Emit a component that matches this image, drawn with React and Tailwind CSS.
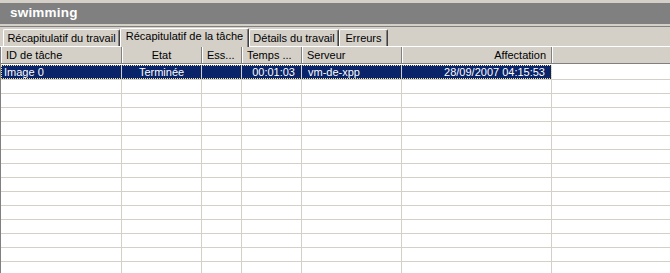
import React from "react";

const cols = [
  { label: "ID de tâche", w: 121, align: "left" },
  { label: "Etat", w: 80, align: "center" },
  { label: "Ess...", w: 40, align: "left" },
  { label: "Temps ...", w: 60, align: "left" },
  { label: "Serveur", w: 100, align: "left" },
  { label: "Affectation", w: 150, align: "right" },
];

const row1 = [
  { t: "Image 0", a: "left" },
  { t: "Terminée", a: "center" },
  { t: "", a: "left" },
  { t: "00:01:03", a: "right" },
  { t: "vm-de-xpp", a: "left" },
  { t: "28/09/2007 04:15:53", a: "right" },
];

const alignCls = {
  left: "justify-start",
  center: "justify-center",
  right: "justify-end",
};

function Tab({ label, w, selected }) {
  return (
    <div
      style={{ width: w }}
      className={
        selected
          ? "shrink-0 h-[19px] flex items-start justify-center pt-[2px] border-l border-t border-white border-r border-r-[#404040] rounded-t-[2px] bg-[#d4d0c8] shadow-[inset_-1px_0_0_#808080] -mb-[1px] z-10"
          : "shrink-0 h-[17px] flex items-center justify-center border-l border-t border-white border-r border-r-[#404040] rounded-t-[2px] bg-[#d4d0c8] shadow-[inset_-1px_0_0_#808080]"
      }
    >
      <span className="leading-none whitespace-nowrap">{label}</span>
    </div>
  );
}

export default function App() {
  const emptyRows = Array.from({ length: 14 });
  return (
    <div
      className="w-[670px] h-[273px] overflow-hidden bg-[#d4d0c8] text-[11px] text-black flex flex-col"
      style={{ fontFamily: '"Liberation Sans", Arial, sans-serif' }}
    >
      <div className="shrink-0 pt-[3px]">
        <div className="h-[21px] bg-[#808080] flex items-center pl-[10px] text-white font-bold text-[13.5px] tracking-[0.2px]">
          swimming
        </div>
      </div>
      <div className="shrink-0 h-[2px]" />
      <div className="shrink-0 h-[1px] bg-[#808080]" />
      <div className="shrink-0 h-[20px] flex items-end pl-[3px] border-b border-white">
        <Tab label="Récapitulatif du travail" w={117} />
        <Tab label="Récapitulatif de la tâche" w={129} selected />
        <Tab label="Détails du travail" w={90} />
        <Tab label="Erreurs" w={49} />
      </div>
      <div className="flex-1 min-h-0 overflow-hidden bg-white border-l border-[#808080] flex flex-col">
        <div className="shrink-0 h-[17px] flex bg-[#d4d0c8] border-b border-[#808080]">
          {cols.map((c, i) => (
            <div
              key={i}
              style={{ width: c.w }}
              className={`shrink-0 h-full flex items-center px-[5px] border-r border-[#808080] shadow-[inset_1px_0_0_#ffffff] ${alignCls[c.align]}`}
            >
              <span className="whitespace-nowrap">{c.label}</span>
            </div>
          ))}
          <div className="flex-1 shadow-[inset_1px_0_0_#ffffff]" />
        </div>
        <div className="shrink-0 h-[1px]" />
        <div className="shrink-0 h-[15px] flex border-b border-[#d4d0c8]">
          <div className="flex bg-[#0a246a] text-white relative">
            <div className="absolute inset-0 border border-dotted border-[#f0e6a0] pointer-events-none" />
            {row1.map((c, i) => (
              <div
                key={i}
                style={{ width: cols[i].w }}
                className={`shrink-0 h-full flex items-center border-r border-[#d4d0c8] ${alignCls[c.a]} ${
                  i === 0 ? "pl-[3px]" : "px-[6px]"
                }`}
              >
                <span className="whitespace-nowrap leading-none">{c.t}</span>
              </div>
            ))}
          </div>
          <div className="flex-1" />
        </div>
        {emptyRows.map((_, r) => (
          <div key={r} className="h-[14px] shrink-0 flex border-b border-[#d4d0c8]">
            {cols.map((c, i) => (
              <div
                key={i}
                style={{ width: c.w }}
                className="shrink-0 h-full border-r border-[#d4d0c8]"
              />
            ))}
            <div className="flex-1" />
          </div>
        ))}
      </div>
    </div>
  );
}
